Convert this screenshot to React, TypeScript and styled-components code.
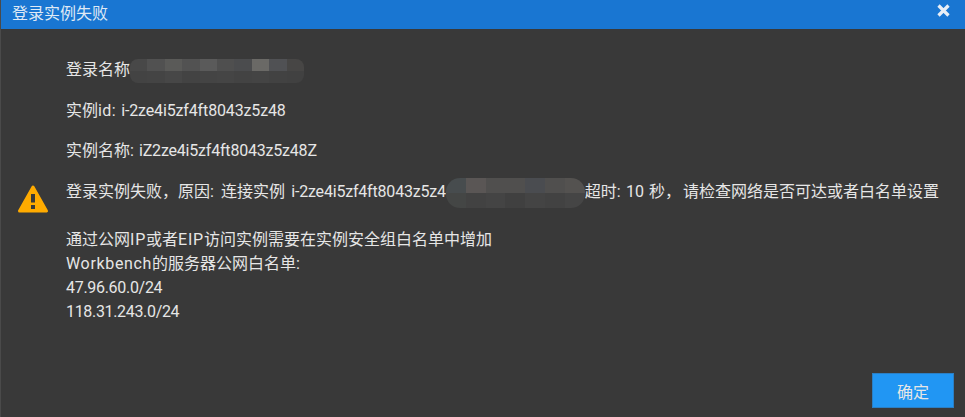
import React from "react";
import styled, { createGlobalStyle } from "styled-components";

const Global = createGlobalStyle`
  html, body { margin: 0; padding: 0; background: #393939; }
  body { font-family: Roboto, "Noto Sans CJK SC", sans-serif; }
`;

const Dialog = styled.div`
  width: 965px;
  height: 417px;
  background: #393939;
  border-left: 1px solid #4a4a4a;
  box-sizing: border-box;
  display: flex;
  flex-direction: column;
  color: #e6e6e6;
  overflow: hidden;
`;

const Header = styled.header`
  height: 29px;
  flex: none;
  background: #1976d2;
  display: flex;
  align-items: center;
  justify-content: space-between;
  padding: 0 14px 0 11px;
  color: #dfe9f5;
  font-size: 16px;
`;

const Title = styled.span`
  position: relative;
  top: -3px;
`;

const Close = styled.svg`
  width: 15px;
  height: 15px;
  position: relative;
  top: -4px;
`;

const Body = styled.main`
  flex: 1;
  display: flex;
  align-items: flex-start;
  padding: 29px 0 0 16px;
  box-sizing: border-box;
  min-height: 0;
`;

const IconBox = styled.div`
  width: 32px;
  height: 30px;
  flex: none;
  margin: 126px 17px 0 0;
`;

const Content = styled.div`
  flex: 1;
  font-size: 16px;
  line-height: 24px;
  word-spacing: 1.2px;
`;

const Row = styled.p`
  margin: 0 0 16.5px;
  white-space: nowrap;
`;

const LastRow = styled(Row)`
  margin-bottom: 24px;
`;

const Line = styled.div`
  white-space: nowrap;
`;

const Latin = styled.span<{ $ls: number }>`
  letter-spacing: ${(p) => p.$ls}px;
`;

const Redacted = styled.span<{ $w: number }>`
  display: inline-block;
  position: relative;
  width: ${(p) => p.$w}px;
  height: 1em;
  vertical-align: middle;
`;

const Patch = styled.span<{ $h: number; $top: number; $radius: number }>`
  position: absolute;
  left: 0;
  right: 0;
  top: ${(p) => p.$top}px;
  height: ${(p) => p.$h}px;
  display: grid;
  grid-template-rows: 1fr 1fr;
  border-radius: ${(p) => p.$radius}px;
  overflow: hidden;
`;

const PatchRow = styled.span`
  display: flex;
`;

const Cell = styled.span<{ $c: string }>`
  flex: 1;
  background: ${(p) => p.$c};
`;

const Footer = styled.footer`
  flex: none;
  height: 54px;
  display: flex;
  justify-content: flex-end;
  align-items: flex-end;
  padding: 0 11px 9px 0;
  box-sizing: border-box;
`;

const Confirm = styled.button`
  width: 82px;
  height: 35px;
  border: 1px solid #2b7fc4;
  background: #2196f3;
  color: #e6e6e6;
  font: inherit;
  font-size: 16px;
  padding: 0;
`;

const top1 = ["#484848","#515151","#5a5a58","#525252","#5a5a5a","#4f4f4f","#4b4c4e","#6a6966","#505154","#474645"];
const bot1 = ["#434343","#444444","#474747","#434343","#444444","#454545","#434343","#444444","#424242","#414141"];
const top2 = ["#474c4e","#5a5655","#504f4e","#504f4e","#4a4c50","#504f4e","#545250"];
const bot2 = ["#444645","#424242","#444444","#404040","#444444","#424242","#454545"];

const Blur = ({ w, h, top, radius, a, b }: { w: number; h: number; top: number; radius: number; a: string[]; b: string[] }) => (
  <Redacted $w={w}>
    <Patch $h={h} $top={top} $radius={radius}>
      <PatchRow>{a.map((c, i) => <Cell key={i} $c={c} />)}</PatchRow>
      <PatchRow>{b.map((c, i) => <Cell key={i} $c={c} />)}</PatchRow>
    </Patch>
  </Redacted>
);

export default function App() {
  return (
    <>
      <Global />
      <Dialog>
        <Header>
          <Title>登录实例失败</Title>
          <Close viewBox="0 0 15 15" aria-label="关闭">
            <path d="M2.5 2.5 L12.5 12.5 M12.5 2.5 L2.5 12.5" stroke="#e8eef6" strokeWidth="3.2" />
          </Close>
        </Header>
        <Body>
          <IconBox>
            <svg width="32" height="30" viewBox="0 0 32 30">
              <path d="M16 3 L29.5 27 H2.5 Z" fill="#ffab00" stroke="#ffab00" strokeWidth="3" strokeLinejoin="round" />
              <rect x="14" y="10" width="4" height="8.5" fill="#393939" />
              <rect x="14" y="21" width="4" height="4" fill="#393939" />
            </svg>
          </IconBox>
          <Content>
            <Row>登录名称<Blur w={174} h={24} top={-4} radius={8} a={top1} b={bot1} /></Row>
            <Row>实例<Latin $ls={0.4}>id:</Latin> <Latin $ls={-0.14}>i-2ze4i5zf4ft8043z5z48</Latin></Row>
            <Row>实例名称: <Latin $ls={-0.2}>iZ2ze4i5zf4ft8043z5z48Z</Latin></Row>
            <LastRow>登录实例失败，原因<Latin $ls={2}>:</Latin> 连接实例<Latin $ls={1}> </Latin><Latin $ls={-0.19}>i-2ze4i5zf4ft8043z5z4</Latin><Blur w={139} h={30} top={-6} radius={14} a={top2} b={bot2} />超时: 10 秒<Latin $ls={2}>，</Latin>请检查网络是否可达或者白名单设置</LastRow>
            <Line>通过公网<Latin $ls={0.8}>IP</Latin>或者<Latin $ls={0.8}>EIP</Latin>访问实例需要在实例安全组白名单中增加</Line>
            <Line><Latin $ls={0.66}>Workbench</Latin>的服务器公网白名单:</Line>
            <Line><Latin $ls={-0.3}>47.96.60.0/24</Latin></Line>
            <Line><Latin $ls={-0.33}>118.31.243.0/24</Latin></Line>
          </Content>
        </Body>
        <Footer>
          <Confirm>确定</Confirm>
        </Footer>
      </Dialog>
    </>
  );
}
